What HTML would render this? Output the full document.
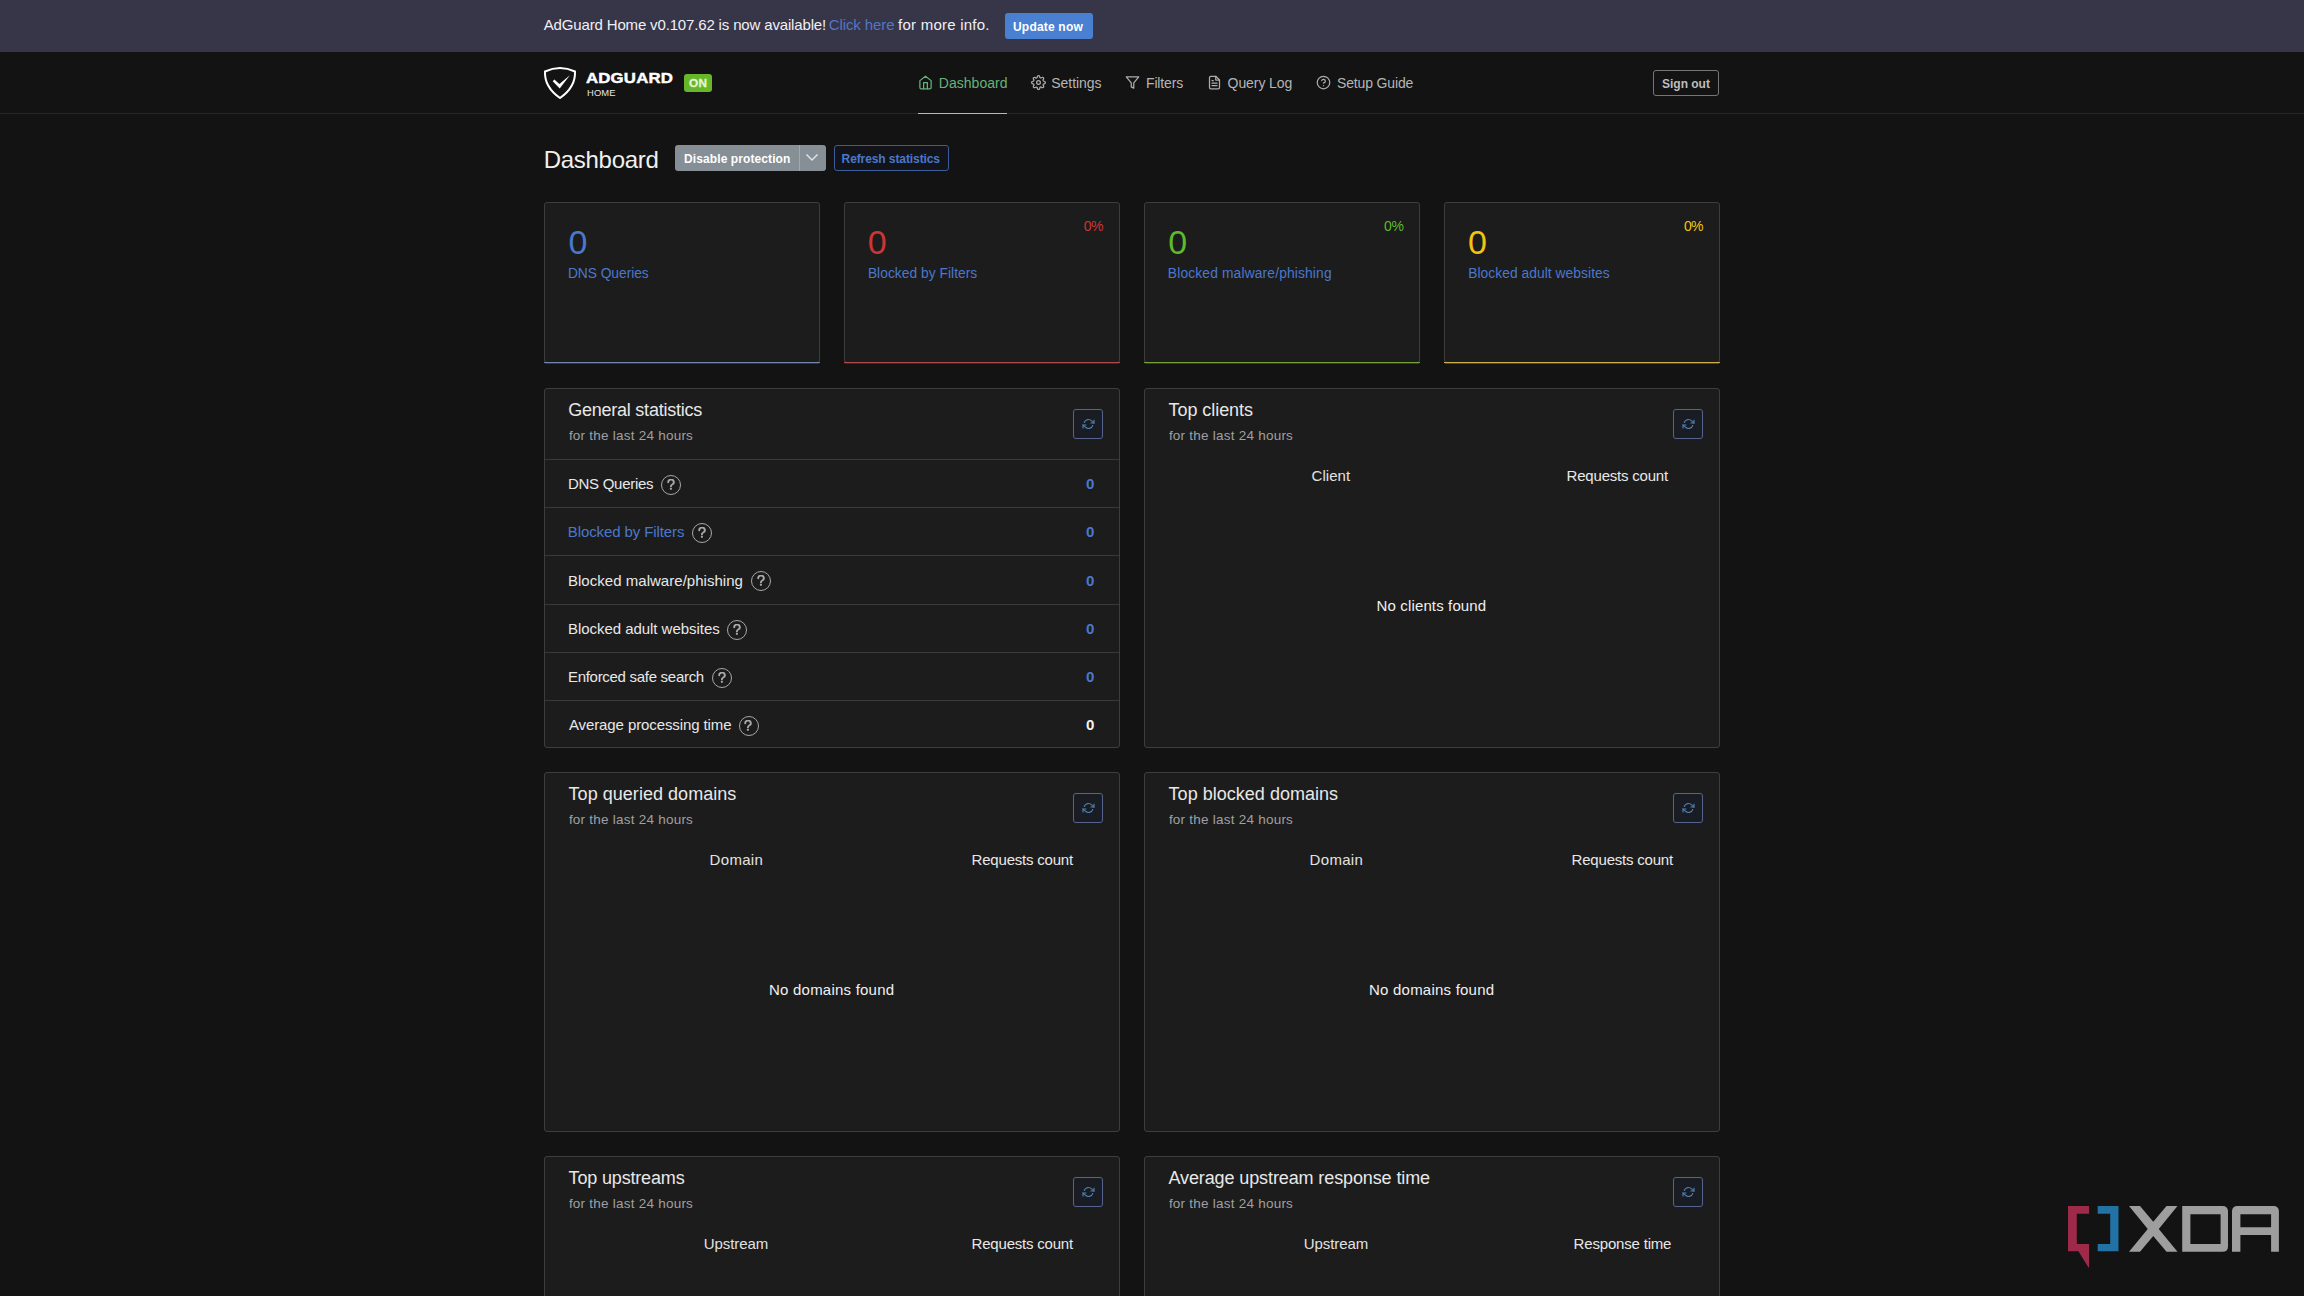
<!DOCTYPE html>
<html lang="en">
<head>
<meta charset="utf-8">
<title>AdGuard Home</title>
<style>
*{box-sizing:border-box;margin:0;padding:0}
html,body{width:2304px;height:1296px;overflow:hidden;background:#131313}
body{font-family:"Liberation Sans",sans-serif;color:#e6e6e6;font-size:15px;position:relative}
a{text-decoration:none}
.t{position:absolute;white-space:nowrap;line-height:1;display:block;z-index:5}
.box{position:absolute}
.topline{left:0;top:0;width:2304px;height:52px;background:#373548}
.btn-update{left:1005px;top:13px;width:88px;height:26px;background:#4a80d2;border-radius:3px}
.header{left:0;top:52px;width:2304px;height:62px;background:#131313;border-bottom:1px solid #262626}
.badge-on{left:684px;top:74px;width:28px;height:18px;background:#66b82a;border-radius:3px}
.navline{left:918px;top:113px;width:89px;height:1px;background:#a3c4ad}
.ico{position:absolute;fill:none;stroke:#adadad;stroke-width:2;stroke-linecap:round;stroke-linejoin:round}
.ico.g{stroke:#67b279}
.btn-signout{left:1653px;top:70px;width:66px;height:26px;border:1px solid #767676;border-radius:3px}
.btn-disable{left:675px;top:145px;width:151px;height:26px;background:#868e96;border-radius:3px}
.btn-disable i{position:absolute;left:124px;top:0;width:1px;height:26px;background:#a2a8ae}
.btn-disable svg{position:absolute;left:130px;top:8px}
.btn-refresh{left:834px;top:145px;width:115px;height:26px;border:1px solid #3d5c9a;border-radius:3px;background:#121419}
.card{position:absolute;background:#1c1c1c;border:1px solid #3d3d3d;border-radius:3px}
.stat{width:276px;height:161px;top:202px}
.stat .line{position:absolute;left:-1px;right:-1px;bottom:-1px;height:1px}
.stat .line2{position:absolute;left:0;right:0;bottom:-2px;height:1px;opacity:.33}
.big{width:576px;height:360px}
.rbtn{position:absolute;left:528px;top:20px;width:30px;height:30px;border:1px solid #56648f;border-radius:3px;background:#1a1c23}
.rbtn svg{position:absolute;left:8px;top:8px}
.rowline{position:absolute;left:0;width:574px;height:1px;background:#3a3a3a}
.q{position:absolute;width:20px;height:20px;border:1.800px solid #a8a8a8;border-radius:50%}
.q svg{position:absolute;left:4.500px;top:3px}
</style>
</head>
<body>
<div class="box topline"></div>
<div class="box btn-update"></div>
<header class="box header"></header>
<svg class="box" style="left:540px;top:62px" width="40" height="40" viewBox="540 62 40 40">
<path d="M545 71.500Q560 64.500 575 71.500C575.500 82 570 91 560 98C550 91 544.500 82 545 71.500Z" fill="none" stroke="#fff" stroke-width="2" stroke-linejoin="round"/>
<path d="M552.700 81.200L554.400 79.500L559.400 84L569.900 75.200L559.700 88.500Z" fill="#fff"/>
</svg>
<div class="box badge-on"></div>
<nav>
<svg class="ico g" style="left:918px;top:75px" width="15" height="15" viewBox="0 0 24 24"><path d="m3 9 9-7 9 7v11a2 2 0 0 1-2 2H5a2 2 0 0 1-2-2z"/><path d="M9 22V12h6v10"/></svg>
<svg class="ico" style="left:1031px;top:75px" width="15" height="15" viewBox="0 0 24 24"><circle cx="12" cy="12" r="3"/><path d="M19.400 15a1.650 1.650 0 0 0 .330 1.820l.060.060a2 2 0 0 1 0 2.830 2 2 0 0 1-2.830 0l-.060-.060a1.650 1.650 0 0 0-1.820-.330 1.650 1.650 0 0 0-1 1.510V21a2 2 0 0 1-2 2 2 2 0 0 1-2-2v-.090A1.650 1.650 0 0 0 9 19.400a1.650 1.650 0 0 0-1.820.330l-.060.060a2 2 0 0 1-2.830 0 2 2 0 0 1 0-2.830l.060-.060a1.650 1.650 0 0 0 .330-1.820 1.650 1.650 0 0 0-1.510-1H3a2 2 0 0 1-2-2 2 2 0 0 1 2-2h.090A1.650 1.650 0 0 0 4.600 9a1.650 1.650 0 0 0-.330-1.820l-.060-.060a2 2 0 0 1 0-2.830 2 2 0 0 1 2.830 0l.060.060a1.650 1.650 0 0 0 1.820.330H9a1.650 1.650 0 0 0 1-1.510V3a2 2 0 0 1 2-2 2 2 0 0 1 2 2v.090a1.650 1.650 0 0 0 1 1.510 1.650 1.650 0 0 0 1.820-.330l.060-.060a2 2 0 0 1 2.830 0 2 2 0 0 1 0 2.830l-.060.060a1.650 1.650 0 0 0-.330 1.820V9a1.650 1.650 0 0 0 1.510 1H21a2 2 0 0 1 2 2 2 2 0 0 1-2 2h-.090a1.650 1.650 0 0 0-1.510 1z"/></svg>
<svg class="ico" style="left:1125px;top:75px" width="15" height="15" viewBox="0 0 24 24"><path d="M22 3H2l8 9.460V19l4 2v-8.540L22 3z"/></svg>
<svg class="ico" style="left:1207px;top:75px" width="15" height="15" viewBox="0 0 24 24"><path d="M14 2H6a2 2 0 0 0-2 2v16c0 1.100.900 2 2 2h12a2 2 0 0 0 2-2V8l-6-6z"/><path d="M14 2v6h6M16 13H8M16 17H8M10 9H8"/></svg>
<svg class="ico" style="left:1316px;top:75px" width="15" height="15" viewBox="0 0 24 24"><circle cx="12" cy="12" r="10"/><path d="M9.090 9a3 3 0 0 1 5.830 1c0 2-3 3-3 3"/><path d="M12 17h.010"/></svg>
<div class="box navline"></div>
</nav>
<div class="box btn-signout"></div>
<div class="box btn-disable"><i></i><svg width="14" height="9" viewBox="0 0 14 9"><path d="M1.500 1.500l5.500 5.500 5.500-5.500" fill="none" stroke="#dfe2e5" stroke-width="1.500"/></svg></div>
<div class="box btn-refresh"></div>
<div class="card stat" style="left:544px"><div class="line" style="background:#6f83ab"></div><div class="line2" style="background:#6f83ab"></div></div>
<div class="card stat" style="left:844px"><div class="line" style="background:#b04a4a"></div><div class="line2" style="background:#b04a4a"></div></div>
<div class="card stat" style="left:1144px"><div class="line" style="background:#74a03c"></div><div class="line2" style="background:#74a03c"></div></div>
<div class="card stat" style="left:1444px"><div class="line" style="background:#cfae4c"></div><div class="line2" style="background:#cfae4c"></div></div>
<section class="card big" style="left:544px;top:388px"><div class="rbtn"><svg width="13" height="12" viewBox="0 0 24 24" fill="none" stroke="#4f7cab" stroke-width="2.400" stroke-linecap="round" stroke-linejoin="round"><path d="M23 4v6h-6"/><path d="M1 20v-6h6"/><path d="M3.500 9a9 9 0 0 1 14.850-3.360L23 10M1 14l4.640 4.360A9 9 0 0 0 20.490 15"/></svg></div><div class="rowline" style="top:70px"></div><div class="q" style="left:116.0px;top:86.0px"><svg width="8" height="11" viewBox="0 0 8 11"><path d="M1.200 3.200a2.800 2.600 0 1 1 4 2.300c-.900.500-1.300.900-1.300 1.900" fill="none" stroke="#a8a8a8" stroke-width="1.900" stroke-linecap="round"/><circle cx="3.900" cy="9.800" r="1.150" fill="#a8a8a8"/></svg></div><div class="rowline" style="top:118px"></div><div class="q" style="left:147.0px;top:134.0px"><svg width="8" height="11" viewBox="0 0 8 11"><path d="M1.200 3.200a2.800 2.600 0 1 1 4 2.300c-.900.500-1.300.900-1.300 1.900" fill="none" stroke="#a8a8a8" stroke-width="1.900" stroke-linecap="round"/><circle cx="3.900" cy="9.800" r="1.150" fill="#a8a8a8"/></svg></div><div class="rowline" style="top:166px"></div><div class="q" style="left:206.0px;top:182.0px"><svg width="8" height="11" viewBox="0 0 8 11"><path d="M1.200 3.200a2.800 2.600 0 1 1 4 2.300c-.900.500-1.300.900-1.300 1.900" fill="none" stroke="#a8a8a8" stroke-width="1.900" stroke-linecap="round"/><circle cx="3.900" cy="9.800" r="1.150" fill="#a8a8a8"/></svg></div><div class="rowline" style="top:215px"></div><div class="q" style="left:182.0px;top:231.0px"><svg width="8" height="11" viewBox="0 0 8 11"><path d="M1.200 3.200a2.800 2.600 0 1 1 4 2.300c-.900.500-1.300.900-1.300 1.900" fill="none" stroke="#a8a8a8" stroke-width="1.900" stroke-linecap="round"/><circle cx="3.900" cy="9.800" r="1.150" fill="#a8a8a8"/></svg></div><div class="rowline" style="top:263px"></div><div class="q" style="left:167.0px;top:279.0px"><svg width="8" height="11" viewBox="0 0 8 11"><path d="M1.200 3.200a2.800 2.600 0 1 1 4 2.300c-.900.500-1.300.900-1.300 1.900" fill="none" stroke="#a8a8a8" stroke-width="1.900" stroke-linecap="round"/><circle cx="3.900" cy="9.800" r="1.150" fill="#a8a8a8"/></svg></div><div class="rowline" style="top:311px"></div><div class="q" style="left:193.8px;top:327.0px"><svg width="8" height="11" viewBox="0 0 8 11"><path d="M1.200 3.200a2.800 2.600 0 1 1 4 2.300c-.900.500-1.300.900-1.300 1.900" fill="none" stroke="#a8a8a8" stroke-width="1.900" stroke-linecap="round"/><circle cx="3.900" cy="9.800" r="1.150" fill="#a8a8a8"/></svg></div></section>
<section class="card big" style="left:1144px;top:388px"><div class="rbtn"><svg width="13" height="12" viewBox="0 0 24 24" fill="none" stroke="#4f7cab" stroke-width="2.400" stroke-linecap="round" stroke-linejoin="round"><path d="M23 4v6h-6"/><path d="M1 20v-6h6"/><path d="M3.500 9a9 9 0 0 1 14.850-3.360L23 10M1 14l4.640 4.360A9 9 0 0 0 20.490 15"/></svg></div></section>
<section class="card big" style="left:544px;top:772px"><div class="rbtn"><svg width="13" height="12" viewBox="0 0 24 24" fill="none" stroke="#4f7cab" stroke-width="2.400" stroke-linecap="round" stroke-linejoin="round"><path d="M23 4v6h-6"/><path d="M1 20v-6h6"/><path d="M3.500 9a9 9 0 0 1 14.850-3.360L23 10M1 14l4.640 4.360A9 9 0 0 0 20.490 15"/></svg></div></section>
<section class="card big" style="left:1144px;top:772px"><div class="rbtn"><svg width="13" height="12" viewBox="0 0 24 24" fill="none" stroke="#4f7cab" stroke-width="2.400" stroke-linecap="round" stroke-linejoin="round"><path d="M23 4v6h-6"/><path d="M1 20v-6h6"/><path d="M3.500 9a9 9 0 0 1 14.850-3.360L23 10M1 14l4.640 4.360A9 9 0 0 0 20.490 15"/></svg></div></section>
<section class="card big" style="left:544px;top:1156px"><div class="rbtn"><svg width="13" height="12" viewBox="0 0 24 24" fill="none" stroke="#4f7cab" stroke-width="2.400" stroke-linecap="round" stroke-linejoin="round"><path d="M23 4v6h-6"/><path d="M1 20v-6h6"/><path d="M3.500 9a9 9 0 0 1 14.850-3.360L23 10M1 14l4.640 4.360A9 9 0 0 0 20.490 15"/></svg></div></section>
<section class="card big" style="left:1144px;top:1156px"><div class="rbtn"><svg width="13" height="12" viewBox="0 0 24 24" fill="none" stroke="#4f7cab" stroke-width="2.400" stroke-linecap="round" stroke-linejoin="round"><path d="M23 4v6h-6"/><path d="M1 20v-6h6"/><path d="M3.500 9a9 9 0 0 1 14.850-3.360L23 10M1 14l4.640 4.360A9 9 0 0 0 20.490 15"/></svg></div></section>

<span id="b1" class="t" style="left:543.75px;top:17.30px;font-size:15px;color:#f0f0f5;letter-spacing:-0.156px;font-weight:normal;">AdGuard Home v0.107.62 is now available!</span>
<a href="#" id="b2" class="t" style="left:828.65px;top:17.30px;font-size:15px;color:#5277c6;letter-spacing:-0.081px;font-weight:normal;">Click here</a>
<span id="b3" class="t" style="left:898.00px;top:17.30px;font-size:15px;color:#f0f0f5;letter-spacing:0.243px;font-weight:normal;">for more info.</span>
<span id="b4" class="t" style="left:1013.00px;top:21.09px;font-size:12px;color:#ffffff;letter-spacing:0.193px;font-weight:bold;">Update now</span>
<span id="h1" class="t" style="left:585.76px;top:69.96px;font-size:15.4px;color:#ffffff;letter-spacing:0.175px;transform:scaleX(1.09);transform-origin:0 0;-webkit-text-stroke:0.45px #fff;font-weight:bold;">ADGUARD</span>
<span id="h2" class="t" style="left:586.92px;top:89.17px;font-size:8.3px;color:#e6e6e6;letter-spacing:0.102px;transform:scaleX(1.13);transform-origin:0 0;font-weight:normal;">HOME</span>
<span id="h3" class="t" style="left:689.40px;top:78.01px;font-size:10.5px;color:#e4f5d0;letter-spacing:0.390px;transform:scaleX(1.12);transform-origin:0 0;-webkit-text-stroke:0.3px #e4f5d0;font-weight:bold;">ON</span>
<a href="#" id="n1" class="t" style="left:938.83px;top:75.75px;font-size:14px;color:#67b279;letter-spacing:0.018px;font-weight:normal;">Dashboard</a>
<a href="#" id="n2" class="t" style="left:1051.24px;top:75.75px;font-size:14px;color:#b5b5b5;letter-spacing:-0.035px;font-weight:normal;">Settings</a>
<a href="#" id="n3" class="t" style="left:1146.00px;top:75.75px;font-size:14px;color:#b5b5b5;letter-spacing:-0.150px;font-weight:normal;">Filters</a>
<a href="#" id="n4" class="t" style="left:1227.62px;top:75.75px;font-size:14px;color:#b5b5b5;letter-spacing:-0.085px;font-weight:normal;">Query Log</a>
<a href="#" id="n5" class="t" style="left:1336.95px;top:75.75px;font-size:14px;color:#b5b5b5;letter-spacing:-0.145px;font-weight:normal;">Setup Guide</a>
<span id="h4" class="t" style="left:1662.09px;top:78.34px;font-size:12px;color:#bdbdbd;letter-spacing:-0.026px;font-weight:bold;">Sign out</span>
<h1 id="p1" class="t" style="left:543.64px;top:147.68px;font-size:24px;color:#f0f0f0;letter-spacing:-0.267px;font-weight:normal;">Dashboard</h1>
<span id="p2" class="t" style="left:684.12px;top:152.84px;font-size:12px;color:#ffffff;letter-spacing:0.089px;font-weight:bold;">Disable protection</span>
<span id="p3" class="t" style="left:841.57px;top:152.84px;font-size:12px;color:#4a78cc;letter-spacing:-0.092px;font-weight:bold;">Refresh statistics</span>
<span id="s0n" class="t" style="left:568.48px;top:225.22px;font-size:34px;color:#4a78cc;font-weight:normal;">0</span>
<a href="#" id="s0l" class="t" style="left:567.88px;top:266.92px;font-size:13.8px;color:#4a78cc;letter-spacing:-0.039px;font-weight:normal;">DNS Queries</a>
<span id="s1n" class="t" style="left:867.73px;top:225.22px;font-size:34px;color:#cd3535;font-weight:normal;">0</span>
<a href="#" id="s1l" class="t" style="left:867.88px;top:266.92px;font-size:13.8px;color:#4a78cc;letter-spacing:0.030px;font-weight:normal;">Blocked by Filters</a>
<span id="s1p" class="t" style="left:1083.80px;top:219.15px;font-size:14px;color:#cd3535;letter-spacing:-0.495px;font-weight:normal;">0%</span>
<span id="s2n" class="t" style="left:1168.16px;top:225.22px;font-size:34px;color:#5eba2a;font-weight:normal;">0</span>
<a href="#" id="s2l" class="t" style="left:1167.82px;top:266.92px;font-size:13.8px;color:#4a78cc;letter-spacing:0.152px;font-weight:normal;">Blocked malware/phishing</a>
<span id="s2p" class="t" style="left:1384.06px;top:219.15px;font-size:14px;color:#5eba2a;letter-spacing:-0.414px;font-weight:normal;">0%</span>
<span id="s3n" class="t" style="left:1467.94px;top:225.22px;font-size:34px;color:#f1c40f;font-weight:normal;">0</span>
<a href="#" id="s3l" class="t" style="left:1468.14px;top:266.92px;font-size:13.8px;color:#4a78cc;letter-spacing:0.057px;font-weight:normal;">Blocked adult websites</a>
<span id="s3p" class="t" style="left:1683.99px;top:219.15px;font-size:14px;color:#f1c40f;letter-spacing:-0.676px;font-weight:normal;">0%</span>
<h2 id="c0t" class="t" style="left:568.22px;top:400.76px;font-size:18px;color:#e8e8e8;letter-spacing:-0.238px;font-weight:normal;">General statistics</h2>
<span id="c0s" class="t" style="left:568.88px;top:428.57px;font-size:13.5px;color:#a0a0a0;letter-spacing:0.234px;font-weight:normal;">for the last 24 hours</span>
<h2 id="c1t" class="t" style="left:1168.58px;top:400.76px;font-size:18px;color:#e8e8e8;letter-spacing:-0.066px;font-weight:normal;">Top clients</h2>
<span id="c1s" class="t" style="left:1168.88px;top:428.57px;font-size:13.5px;color:#a0a0a0;letter-spacing:0.234px;font-weight:normal;">for the last 24 hours</span>
<h2 id="c2t" class="t" style="left:568.58px;top:784.76px;font-size:18px;color:#e8e8e8;letter-spacing:0.034px;font-weight:normal;">Top queried domains</h2>
<span id="c2s" class="t" style="left:568.88px;top:812.57px;font-size:13.5px;color:#a0a0a0;letter-spacing:0.234px;font-weight:normal;">for the last 24 hours</span>
<h2 id="c3t" class="t" style="left:1168.58px;top:784.76px;font-size:18px;color:#e8e8e8;letter-spacing:0.024px;font-weight:normal;">Top blocked domains</h2>
<span id="c3s" class="t" style="left:1168.88px;top:812.57px;font-size:13.5px;color:#a0a0a0;letter-spacing:0.234px;font-weight:normal;">for the last 24 hours</span>
<h2 id="c4t" class="t" style="left:568.58px;top:1168.76px;font-size:18px;color:#e8e8e8;letter-spacing:-0.166px;font-weight:normal;">Top upstreams</h2>
<span id="c4s" class="t" style="left:568.88px;top:1196.57px;font-size:13.5px;color:#a0a0a0;letter-spacing:0.234px;font-weight:normal;">for the last 24 hours</span>
<h2 id="c5t" class="t" style="left:1168.48px;top:1168.76px;font-size:18px;color:#e8e8e8;letter-spacing:-0.110px;font-weight:normal;">Average upstream response time</h2>
<span id="c5s" class="t" style="left:1168.88px;top:1196.57px;font-size:13.5px;color:#a0a0a0;letter-spacing:0.234px;font-weight:normal;">for the last 24 hours</span>
<span id="c1ha" class="t" style="left:1311.57px;top:468.30px;font-size:15px;color:#e2e2e2;letter-spacing:0.030px;font-weight:normal;">Client</span>
<span id="c1hb" class="t" style="left:1566.62px;top:468.30px;font-size:15px;color:#e8e8e8;letter-spacing:-0.209px;font-weight:normal;">Requests count</span>
<span id="c2ha" class="t" style="left:709.62px;top:852.30px;font-size:15px;color:#e2e2e2;letter-spacing:0.311px;font-weight:normal;">Domain</span>
<span id="c2hb" class="t" style="left:971.62px;top:852.30px;font-size:15px;color:#e8e8e8;letter-spacing:-0.209px;font-weight:normal;">Requests count</span>
<span id="c3ha" class="t" style="left:1309.62px;top:852.30px;font-size:15px;color:#e2e2e2;letter-spacing:0.311px;font-weight:normal;">Domain</span>
<span id="c3hb" class="t" style="left:1571.62px;top:852.30px;font-size:15px;color:#e8e8e8;letter-spacing:-0.209px;font-weight:normal;">Requests count</span>
<span id="c4ha" class="t" style="left:703.78px;top:1236.30px;font-size:15px;color:#e2e2e2;letter-spacing:-0.093px;font-weight:normal;">Upstream</span>
<span id="c4hb" class="t" style="left:971.62px;top:1236.30px;font-size:15px;color:#e8e8e8;letter-spacing:-0.209px;font-weight:normal;">Requests count</span>
<span id="c5ha" class="t" style="left:1303.78px;top:1236.30px;font-size:15px;color:#e2e2e2;letter-spacing:-0.093px;font-weight:normal;">Upstream</span>
<span id="c5hb" class="t" style="left:1573.62px;top:1236.30px;font-size:15px;color:#e8e8e8;letter-spacing:-0.184px;font-weight:normal;">Response time</span>
<span id="c1e" class="t" style="left:1376.62px;top:598.30px;font-size:15px;color:#f0f0f0;letter-spacing:0.132px;font-weight:normal;">No clients found</span>
<span id="c2e" class="t" style="left:769.07px;top:982.30px;font-size:15px;color:#f0f0f0;letter-spacing:0.215px;font-weight:normal;">No domains found</span>
<span id="c3e" class="t" style="left:1369.07px;top:982.30px;font-size:15px;color:#f0f0f0;letter-spacing:0.215px;font-weight:normal;">No domains found</span>
<span id="r0k" class="t" style="left:567.96px;top:476.30px;font-size:15px;color:#e8e8e8;letter-spacing:-0.278px;font-weight:normal;">DNS Queries</span>
<span id="r0v" class="t" style="left:1085.92px;top:476.30px;font-size:15px;color:#4a78cc;font-weight:bold;">0</span>
<a href="#" id="r1k" class="t" style="left:567.75px;top:524.30px;font-size:15px;color:#4a78cc;letter-spacing:-0.100px;font-weight:normal;">Blocked by Filters</a>
<span id="r1v" class="t" style="left:1085.92px;top:524.30px;font-size:15px;color:#4a78cc;font-weight:bold;">0</span>
<span id="r2k" class="t" style="left:567.96px;top:572.80px;font-size:15px;color:#e8e8e8;letter-spacing:0.032px;font-weight:normal;">Blocked malware/phishing</span>
<span id="r2v" class="t" style="left:1085.92px;top:572.80px;font-size:15px;color:#4a78cc;font-weight:bold;">0</span>
<span id="r3k" class="t" style="left:567.96px;top:621.30px;font-size:15px;color:#e8e8e8;letter-spacing:-0.041px;font-weight:normal;">Blocked adult websites</span>
<span id="r3v" class="t" style="left:1085.92px;top:621.30px;font-size:15px;color:#4a78cc;font-weight:bold;">0</span>
<span id="r4k" class="t" style="left:567.96px;top:669.30px;font-size:15px;color:#e8e8e8;letter-spacing:-0.290px;font-weight:normal;">Enforced safe search</span>
<span id="r4v" class="t" style="left:1085.92px;top:669.30px;font-size:15px;color:#4a78cc;font-weight:bold;">0</span>
<span id="r5k" class="t" style="left:568.96px;top:717.30px;font-size:15px;color:#e8e8e8;letter-spacing:-0.101px;font-weight:normal;">Average processing time</span>
<span id="r5v" class="t" style="left:1085.95px;top:717.30px;font-size:15px;color:#f2f2f2;font-weight:bold;">0</span>
<svg class="box" style="left:2060px;top:1200px;z-index:9" width="230" height="72" viewBox="2060 1200 230 72">
<path d="M2068 1206H2089.100V1213.800H2076.800V1244H2089.100V1267.400H2088.500L2078.400 1251.300H2068Z" fill="#9e2a4a"/>
<path d="M2097.700 1206H2118.500V1251.300H2097.700V1244H2110.200V1213.800H2097.700Z" fill="#2272a6"/>
<g fill="#9e9e9e">
<path d="M2129 1206H2140L2153.250 1221.800L2166.500 1206H2177.500L2158.750 1228.900L2177.500 1251.800H2166.500L2153.250 1236L2140 1251.800H2129L2147.750 1228.900Z"/>
<path fill-rule="evenodd" d="M2182.200 1206H2222.500Q2228 1206 2228 1211.500V1246.300Q2228 1251.800 2222.500 1251.800H2182.200ZM2190.400 1214.300V1244H2220.600V1214.300Z"/>
<path fill-rule="evenodd" d="M2232 1251.800V1211.500Q2232 1206 2237.500 1206H2273.400Q2278.900 1206 2278.900 1211.500V1251.800H2271.100V1235.100H2240.400V1251.800ZM2240.400 1214.300V1227.300H2271.100V1214.300Z"/>
</g></svg>
</body>
</html>
